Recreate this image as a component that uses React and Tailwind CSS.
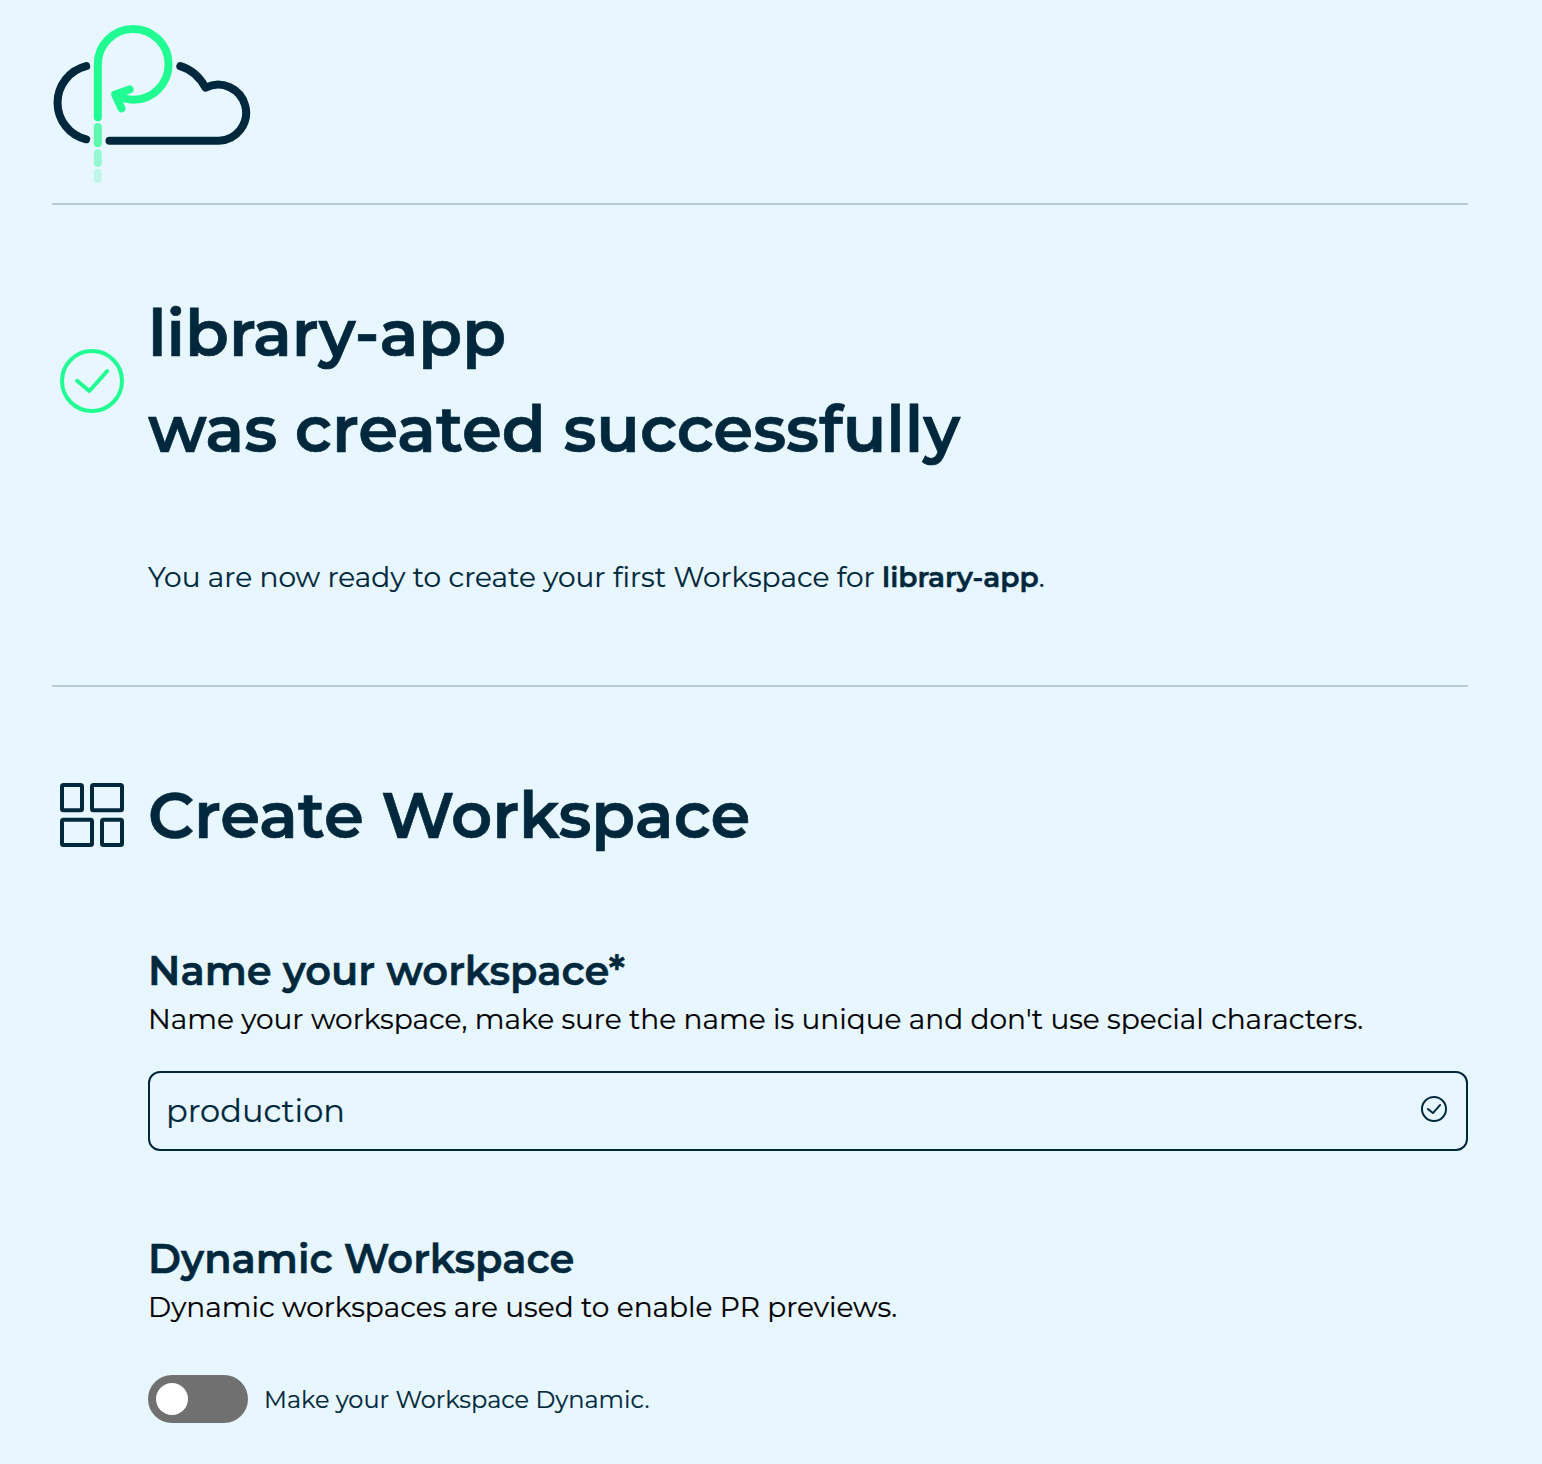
import React from "react";

function CloudLogo() {
  return (
    <svg width="200" height="160" viewBox="52 24 200 160" fill="none" strokeWidth="8" strokeLinecap="round" strokeLinejoin="round" aria-label="Logo">
      <g stroke="#00283c">
        <path d="M86.2 66.1A37.7 37.7 0 0 0 86.2 139.3" />
        <path d="M180.3 66.2C191.500 69.600 200 77.500 205.500 87.700A28 28 0 1 1 218.900 140.700H109.500" />
      </g>
      <g stroke="#21fc92">
        <path d="M97.800 117.200V64.500A35.400 35.400 0 1 1 133.200 99.700Q125.500 99.700 116.500 95.500" />
        <path d="M129.600 89.400L115.200 94.600L121.500 108.300" />
      </g>
      <path d="M97.800 127V143.300" stroke="#5cf9ae" />
      <path d="M97.800 153.300V163" stroke="#96f8d0" />
      <path d="M97.800 172.800V179" stroke="#c0f6e8" />
    </svg>
  );
}

function CheckCircle({ className, strokeWidth = 2 }) {
  return (
    <svg className={className} viewBox="0 0 32 32" fill="none" stroke="currentColor" strokeWidth={strokeWidth} strokeLinecap="round" strokeLinejoin="round">
      <circle cx="16" cy="16" r={16 - strokeWidth / 2} />
      <path d="M8.500 15.900L14.700 21L23.600 11" />
    </svg>
  );
}

function WorkspaceIcon() {
  return (
    <svg className="size-16" viewBox="0 0 64 64" fill="none" stroke="currentColor" strokeWidth="4">
      <rect x="2" y="2" width="20" height="25.300" rx="1.500" />
      <rect x="32" y="2" width="30" height="25.300" rx="1.500" />
      <rect x="2" y="36.700" width="30" height="25.300" rx="1.500" />
      <rect x="42" y="36.700" width="20" height="25.300" rx="1.500" />
    </svg>
  );
}

function Field({ title, description, children }) {
  return (
    <section>
      <h3 className="text-[40px] leading-[56px] font-semibold [-webkit-text-stroke:0.5px_currentColor]">{title}</h3>
      <p className="text-[28px] leading-[40px] text-black">{description}</p>
      {children}
    </section>
  );
}

export default function App() {
  return (
    <main className="min-h-screen bg-[#e8f7ff] pt-6 pr-[74px] pl-[52px] font-['Montserrat',Inter,sans-serif] text-[#00283c] [-webkit-text-stroke:0.2px_currentColor]">
      <header className="h-[181px] border-b-2 border-[#b9cad6]">
        <CloudLogo />
      </header>

      <section className="h-[482px] border-b-2 border-[#b9cad6] pt-20">
        <div className="flex items-center gap-6 pl-2">
          <CheckCircle className="size-16 shrink-0 text-[#21fc92]" />
          <h1 className="text-[64px] leading-[96px] font-semibold [-webkit-text-stroke:0.7px_currentColor]">
            library-app
            <br />
            was created successfully
          </h1>
        </div>
        <p className="mt-20 pl-24 text-[28px] leading-[40px]">
          You are now ready to create your first Workspace for <b className="font-semibold [-webkit-text-stroke:0.5px_currentColor]">library-app</b>.
        </p>
      </section>

      <div className="flex items-center gap-6 pt-20 pl-2">
        <WorkspaceIcon />
        <h2 className="text-[64px] leading-[96px] font-semibold [-webkit-text-stroke:0.7px_currentColor]">Create Workspace</h2>
      </div>

      <div className="flex flex-col gap-[80px] pt-20 pl-24">
        <Field title="Name your workspace*" description="Name your workspace, make sure the name is unique and don't use special characters.">
          <div className="mt-8 flex h-20 items-center rounded-xl border-2 border-[#00283c] pr-[19px] pl-4">
            <input className="min-w-0 flex-1 bg-transparent text-[32px] outline-none" defaultValue="production" />
            <CheckCircle className="mb-1 size-[26px]" strokeWidth={2.4} />
          </div>
        </Field>
        <Field title="Dynamic Workspace" description="Dynamic workspaces are used to enable PR previews.">
          <label className="mt-12 flex items-center gap-4">
            <span className="flex h-12 w-[100px] items-center rounded-full bg-[#707070] px-2">
              <span className="size-8 rounded-full bg-white" />
            </span>
            <span className="pt-0.5 text-[24px] leading-8">Make your Workspace Dynamic.</span>
          </label>
        </Field>
      </div>
    </main>
  );
}
